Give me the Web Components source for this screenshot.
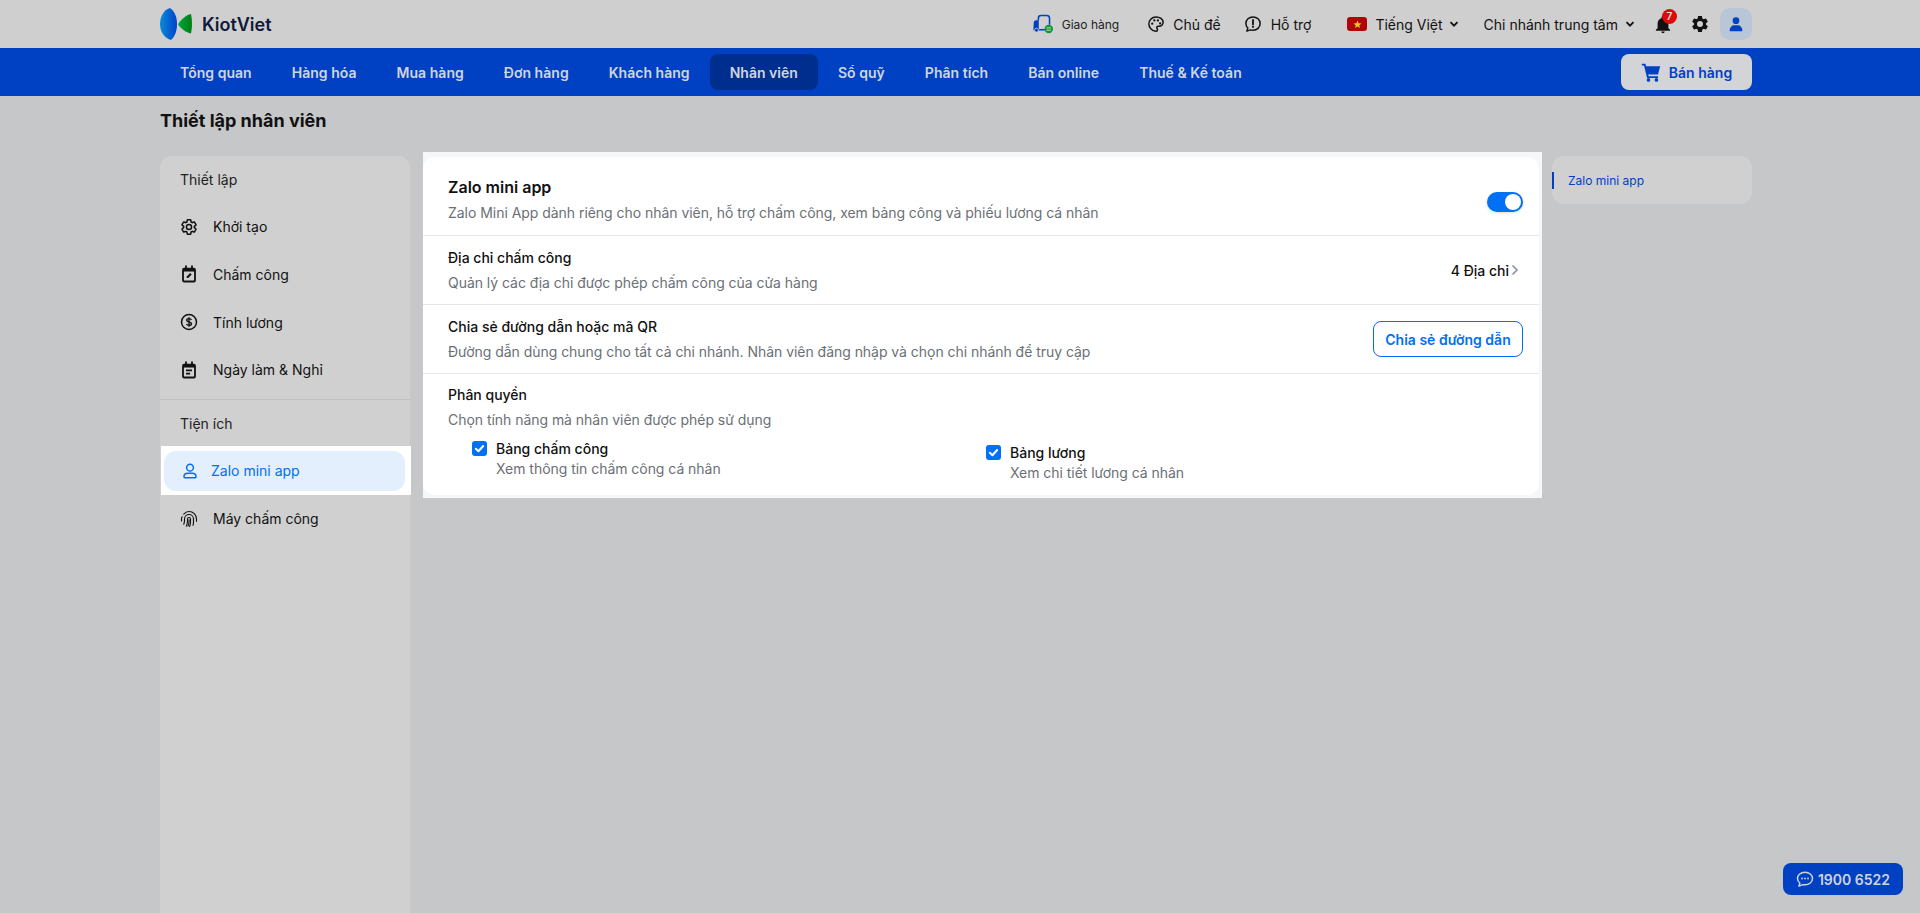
<!DOCTYPE html>
<html lang="vi">
<head>
<meta charset="utf-8">
<title>Thiết lập nhân viên</title>
<style>
html,body{margin:0;height:100%;overflow:hidden;background:#c6c7c9;font-family:Inter,"Noto Sans",sans-serif;}
</style>
</head>
<body>
<kv-app></kv-app>
<script>
const ICONS={
 gearOutline:'<svg viewBox="0 0 24 24" fill="none" stroke="currentColor" stroke-width="2"><path d="M19.14 12.94c.04-.3.06-.61.06-.94 0-.32-.02-.64-.07-.94l2.03-1.58a.49.49 0 0 0 .12-.61l-1.92-3.32a.488.488 0 0 0-.59-.22l-2.39.96c-.5-.38-1.03-.7-1.62-.94l-.36-2.54a.484.484 0 0 0-.48-.41h-3.84c-.24 0-.43.17-.47.41l-.36 2.54c-.59.24-1.13.57-1.62.94l-2.39-.96c-.22-.08-.47 0-.59.22L2.74 8.87c-.12.21-.08.47.12.61l2.03 1.58c-.05.3-.09.63-.09.94s.02.64.07.94l-2.03 1.58a.49.49 0 0 0-.12.61l1.92 3.32c.12.22.37.29.59.22l2.39-.96c.5.38 1.03.7 1.62.94l.36 2.54c.05.24.24.41.48.41h3.84c.24 0 .44-.17.47-.41l.36-2.54c.59-.24 1.13-.56 1.62-.94l2.39.96c.22.08.47 0 .59-.22l1.92-3.32c.12-.22.07-.47-.12-.61l-2.01-1.58z"/><circle cx="12" cy="12" r="3.4"/></svg>',
 calEdit:'<svg viewBox="0 0 24 24" fill="none" stroke="currentColor" stroke-width="2.4"><rect x="4" y="5" width="16" height="17" rx="1.5"/><path d="M4 7h16" stroke-width="3.4"/><path d="M8 1.5v4M16 1.5v4" stroke-linecap="round"/><path d="M9 17.2v-2l4.6-4.4 2 2-4.6 4.4z" fill="currentColor" stroke="none"/></svg>',
 dollar:'<svg viewBox="0 0 24 24" fill="none" stroke="currentColor" stroke-width="2"><circle cx="12" cy="12" r="10"/><path d="M15.2 9.2c-.4-1-1.6-1.7-3.2-1.7-1.800 0-3.100.9-3.100 2.200 0 3 6.400 1.600 6.400 4.600 0 1.300-1.400 2.200-3.300 2.200-1.600 0-2.900-.7-3.300-1.800M12 5.800v12.400" stroke-width="1.800"/></svg>',
 calNote:'<svg viewBox="0 0 24 24" fill="none" stroke="currentColor" stroke-width="2.4"><rect x="4" y="5" width="16" height="17" rx="1.5"/><path d="M4 7h16" stroke-width="3.4"/><path d="M8 1.5v4M16 1.500v4" stroke-linecap="round"/><path d="M8 12.500h8M8 16.800h5.500" stroke-width="2.200"/></svg>',
 person:'<svg viewBox="0 0 24 24" fill="none" stroke="currentColor" stroke-width="2"><circle cx="12" cy="7.500" r="4.500"/><path d="M4 19.500c0-3 2.500-4.500 5-4.500h6c2.500 0 5 1.500 5 4.500 0 1-.8 1.500-1.500 1.500h-13c-.7 0-1.500-.5-1.500-1.500z"/></svg>',
 finger:'<svg viewBox="0 0 24 24" fill="none" stroke="currentColor" stroke-width="1.500" stroke-linecap="round"><path d="M5 5.500C6.800 3.400 9.300 2 12 2c5.500 0 10 4.500 10 10v3"/><path d="M2.800 9C2.300 10 2 11 2 12v2.500"/><path d="M5 19c.6-1.500 1-3.300 1-5v-2c0-3.300 2.700-6 6-6s6 2.700 6 6v4c0 1.500-.2 3-.6 4.500"/><path d="M8.400 21.500C9.400 19.400 10 17 10 14.500V12c0-1.100.9-2 2-2s2 .9 2 2v3.500c0 2.300-.4 4.500-1.200 6.500"/><path d="M12 13v2.500c0 2-.5 4-1.300 5.800" /></svg>',
 truck:'<svg viewBox="0 0 28 26" fill="none"><path d="M8 8V5.500C8 3.500 9.500 2 11.500 2h7C21 2 22.500 3.500 22.500 5.500V14" stroke="#0041c4" stroke-width="2"/><path d="M9 20.500h8" stroke="#0041c4" stroke-width="2"/><path d="M2 11c0-1.500 1-3 3-3h3.500v13.500H3c-1 0-1.500-.6-1.500-1.500z" fill="#0041c4"/><circle cx="5.500" cy="21" r="2.500" fill="#0041c4" stroke="#cfcfcf" stroke-width="1"/><circle cx="21.500" cy="19.500" r="5.500" fill="#0a9a2e"/><path d="M18.500 18h6M18.500 21h6" stroke="#cfcfcf" stroke-width="1.300"/></svg>',
 palette:'<svg viewBox="0 0 24 24" fill="none"><path d="M12 2.500C6.700 2.500 2.500 6.700 2.500 12s4.200 9.500 9.500 9.500c1.200 0 2-.9 2-1.900 0-.6-.2-1-.5-1.400-.3-.4-.5-.8-.5-1.300 0-1 .8-1.900 1.900-1.900H16c3 0 5.500-2.300 5.500-5.200 0-4.300-4.300-7.300-9.500-7.300z" stroke="currentColor" stroke-width="2"/><circle cx="7" cy="11.500" r="1.500" fill="currentColor"/><circle cx="9.800" cy="7.200" r="1.500" fill="currentColor"/><circle cx="14.500" cy="7.200" r="1.500" fill="currentColor"/><circle cx="17.500" cy="11.300" r="1.500" fill="currentColor"/></svg>',
 help:'<svg viewBox="0 0 24 24" fill="none"><path d="M12 2.500c-5.300 0-9.500 3.900-9.500 8.900 0 2.400 1 4.500 2.600 6.100l-1.300 4 4.800-1.700c1.100.4 2.200.6 3.400.6 5.300 0 9.500-3.900 9.500-9s-4.200-8.900-9.500-8.900z" stroke="currentColor" stroke-width="2" stroke-linejoin="round"/><path d="M12 6.500v6" stroke="currentColor" stroke-width="2.400" stroke-linecap="round"/><circle cx="12" cy="15.800" r="1.400" fill="currentColor"/></svg>',
 chev:'<svg viewBox="0 0 10 10" fill="none" stroke="currentColor" stroke-width="1.800"><path d="M1.500 3.200 5 6.700l3.500-3.500"/></svg>',
 bell:'<svg viewBox="0 0 24 24" fill="currentColor"><path d="M12 23c1.100 0 2-.9 2-2h-4c0 1.100.9 2 2 2zm6.500-6v-5.500c0-3.100-1.700-5.700-4.700-6.400V4.300c0-1-.8-1.800-1.800-1.800s-1.800.8-1.800 1.800v.8c-3 .7-4.700 3.300-4.700 6.400V17L3.500 19v1h17v-1z"/></svg>',
 gear:'<svg viewBox="0 0 24 24" fill="currentColor"><path fill-rule="evenodd" d="M19.140 12.940c.04-.3.06-.61.06-.94 0-.32-.02-.64-.07-.94l2.030-1.580a.49.49 0 0 0 .12-.61l-1.920-3.320a.488.488 0 0 0-.59-.22l-2.390.96c-.5-.38-1.030-.7-1.620-.94l-.36-2.540a.484.484 0 0 0-.48-.41h-3.840c-.24 0-.43.17-.47.41l-.36 2.540c-.59.24-1.130.57-1.620.94l-2.390-.96c-.22-.08-.47 0-.59.22L2.740 8.870c-.12.21-.08.47.12.61l2.030 1.580c-.05.3-.09.63-.09.94s.02.64.07.94l-2.030 1.580a.49.49 0 0 0-.12.61l1.920 3.320c.12.22.37.29.59.22l2.390-.96c.5.38 1.030.7 1.620.94l.36 2.540c.05.24.24.41.48.41h3.840c.24 0 .44-.17.47-.41l.36-2.540c.59-.24 1.130-.56 1.620-.94l2.390.96c.22.08.47 0 .59-.22l1.920-3.320c.12-.22.07-.47-.12-.61l-2.010-1.580zM12 15.600a3.600 3.600 0 1 1 0-7.200 3.600 3.600 0 0 1 0 7.200z"/></svg>',
 avatar:'<svg viewBox="0 0 24 24" fill="currentColor"><circle cx="12" cy="7" r="5"/><path d="M2.500 22c0-5 3.500-8 7-8h5c3.500 0 7 3 7 8 0 .6-.4 1-1 1h-17c-.6 0-1-.4-1-1z"/></svg>',
 cart:'<svg viewBox="0 0 24 24" fill="currentColor"><path d="M1 2h4.300l.8 3H23l-2.600 10H8.600l.5 2h11.400v2.300H7.300L3.600 4.300H1z"/><circle cx="9" cy="21.500" r="2.200"/><circle cx="18.500" cy="21.500" r="2.200"/></svg>',
 chat:'<svg viewBox="0 0 24 24" fill="none"><path d="M12 3c-5.500 0-10 3.600-10 8.300 0 2.400 1.200 4.500 3.100 6L4 21.500l5.200-2c.9.200 1.800.3 2.800.3 5.500 0 10-3.800 10-8.500S17.500 3 12 3z" stroke="currentColor" stroke-width="2" stroke-linejoin="round"/><circle cx="8" cy="11.300" r="1.200" fill="currentColor"/><circle cx="12" cy="11.300" r="1.200" fill="currentColor"/><circle cx="16" cy="11.300" r="1.200" fill="currentColor"/></svg>'
};
function def(name,css,html){
  customElements.define(name,class extends HTMLElement{
    connectedCallback(){
      if(this.shadowRoot)return;
      const r=this.attachShadow({mode:'open'});
      r.innerHTML='<style>'+css+'</style>'+(typeof html==='function'?html(this):html);
    }
  });
}
const a=(el,k,d='')=>el.getAttribute(k)??d;

def('kv-icon',':host{display:inline-flex;flex:none;line-height:0}svg{width:100%;height:100%;display:block}',
  el=>ICONS[a(el,'name')]||'');

def('kv-logo',`:host{display:flex;align-items:center}
  svg{width:32px;height:32px;display:block;margin-right:10px}
  span{font:600 18px Inter,sans-serif;color:#0f1a3a}`,
  `<svg viewBox="0 0 32 32"><defs><linearGradient id="b" x1="0" x2="1"><stop offset="0" stop-color="#0b8ad8"/><stop offset="1" stop-color="#0043cc"/></linearGradient><linearGradient id="g" x1="0" x2="1"><stop offset="0" stop-color="#00a53d"/><stop offset="1" stop-color="#007f10"/></linearGradient></defs>
  <path d="M10 0C3.500 2 0 9 0 16c0 7 3.500 13.500 11 16 4-3.500 6-9.500 6-16C17 9.500 15 3.500 10 0z" fill="url(#b)"/>
  <path d="M31 6c-5 1-10 5.500-13 10.200C21 21 26 24.500 31 25.500c1.300-6 1.300-13.500 0-19.500z" fill="url(#g)"/></svg><span>KiotViet</span>`);

def('kv-top-link',`:host{display:flex;align-items:center;color:#111;font:400 14px Inter,sans-serif;white-space:nowrap}
  ::slotted(kv-icon){margin-right:var(--g,8px)}`,'<slot></slot>');

def('kv-topbar',`:host{display:flex;align-items:center;height:48px;background:#cfcfcf;padding:0 168px 0 160px;box-sizing:border-box}
  .r{margin-left:auto;display:flex;align-items:center}
  .flag{width:20px;height:14px;background:#b00606;border-radius:3px;display:flex;align-items:center;justify-content:center;margin-right:8px}
  .flag svg{width:9px;height:9px}
  .bell{position:relative;width:20px;height:22px;color:#111;margin-left:18px}
  .badge{position:absolute;top:-4px;left:9px;width:15px;height:15px;border-radius:50%;background:#d90b0b;color:#e8e0e0;font:600 10px/15px Inter,sans-serif;text-align:center}
  .avatar{width:32px;height:32px;border-radius:10px;background:#b9c6d8;display:flex;align-items:center;justify-content:center;color:#0041c4;margin-left:10px}
  `,`<kv-logo></kv-logo><div class="r">
   <kv-top-link style="--g:8px;font-size:12px;color:#222"><kv-icon name="truck" style="width:22px;height:20px"></kv-icon>Giao hàng</kv-top-link>
   <kv-top-link style="margin-left:28px;--g:8px"><kv-icon name="palette" style="width:18px;height:18px"></kv-icon>Chủ đề</kv-top-link>
   <kv-top-link style="margin-left:23px;--g:9px"><kv-icon name="help" style="width:18px;height:18px"></kv-icon>Hỗ trợ</kv-top-link>
   <kv-top-link style="margin-left:36px"><span class="flag"><svg viewBox="0 0 20 20"><polygon fill="#f4c430" points="10,1 12.400,7.400 19,7.500 13.800,11.600 15.700,18 10,14.200 4.300,18 6.200,11.600 1,7.500 7.600,7.400"/></svg></span>Tiếng Việt<kv-icon name="chev" style="width:10px;height:10px;margin:0 0 0 6px"></kv-icon></kv-top-link>
   <kv-top-link style="margin-left:25px">Chi nhánh trung tâm<kv-icon name="chev" style="width:10px;height:10px;margin:0 0 0 7px"></kv-icon></kv-top-link>
   <div class="bell"><kv-icon name="bell" style="width:20px;height:22px"></kv-icon><span class="badge">7</span></div>
   <kv-icon name="gear" style="width:20px;height:20px;margin-left:17px;color:#111"></kv-icon>
   <div class="avatar"><kv-icon name="avatar" style="width:16px;height:16px"></kv-icon></div>
  </div>`);

def('kv-nav-item',`:host{display:flex;align-items:center;height:36px;padding:0 20px;border-radius:8px;color:#d0d5dd;font:600 14px Inter,sans-serif;white-space:nowrap;letter-spacing:.03px}
  :host([active]){background:#002e8f}`,'<slot></slot>');

def('kv-navbar',`:host{display:flex;align-items:center;height:48px;background:#0041c4;padding:0 168px 0 160px;box-sizing:border-box}
  button{margin-left:auto;display:flex;align-items:center;height:36px;width:131px;justify-content:center;gap:8px;border:0;border-radius:8px;background:#d2d4d8;color:#0041c4;font:600 14px Inter,sans-serif;padding:0}`,
  `<kv-nav-item>Tổng quan</kv-nav-item><kv-nav-item>Hàng hóa</kv-nav-item><kv-nav-item>Mua hàng</kv-nav-item><kv-nav-item>Đơn hàng</kv-nav-item><kv-nav-item>Khách hàng</kv-nav-item><kv-nav-item active>Nhân viên</kv-nav-item><kv-nav-item>Sổ quỹ</kv-nav-item><kv-nav-item>Phân tích</kv-nav-item><kv-nav-item>Bán online</kv-nav-item><kv-nav-item>Thuế &amp; Kế toán</kv-nav-item>
  <button><kv-icon name="cart" style="width:20px;height:20px"></kv-icon>Bán hàng</button>`);

def('kv-side-item',`:host{display:flex;align-items:center;height:47.67px;padding-left:20px;color:#111;font:400 14px Inter,sans-serif;box-sizing:border-box}
  kv-icon{width:18px;height:18px;margin-right:15px}
  .p{display:contents}
  :host([active]){background:#fff;height:49px;margin:-2px -1px 0 1px;padding:5px 6px 4px 3px}
  :host([active]) .p{display:flex;align-items:center;flex:1;height:100%;background:#e3effd;border-radius:12px;color:#0070f4;padding-left:17px}
  :host([active]) kv-icon{margin-right:12px}`,
  el=>`<div class="p"><kv-icon name="${a(el,'icon')}"></kv-icon><slot></slot></div>`);

def('kv-side-head',`:host{display:flex;align-items:center;height:48px;padding-left:20px;color:#222;font:400 14px Inter,sans-serif}`,'<slot></slot>');

def('kv-sidebar',`:host{display:block;width:250px;flex:none;background:#d0d0d0;border-radius:12px 12px 0 0;margin-top:4px}
  .h1{height:47px}
  hr{border:0;border-top:1px solid #bfc0c2;margin:5.3px 0 0}`,
  `<kv-side-head class="h1">Thiết lập</kv-side-head>
   <kv-side-item icon="gearOutline">Khởi tạo</kv-side-item>
   <kv-side-item icon="calEdit">Chấm công</kv-side-item>
   <kv-side-item icon="dollar">Tính lương</kv-side-item>
   <kv-side-item icon="calNote">Ngày làm &amp; Nghỉ</kv-side-item>
   <hr>
   <kv-side-head>Tiện ích</kv-side-head>
   <kv-side-item active icon="person">Zalo mini app</kv-side-item>
   <kv-side-item icon="finger">Máy chấm công</kv-side-item>`);

def('kv-row',`:host{display:flex;align-items:center;justify-content:space-between;box-sizing:border-box;padding:0 16px 0 25px;border-bottom:1px solid #e5e7eb}
  :host([big]){padding-top:12px}
  .w{padding-bottom:1px}
  :host([big]) .w{padding-bottom:6px}
  .t{font:500 14px/17px Inter,sans-serif;color:#111}
  :host([big]) .t{font:600 16px/20px Inter,sans-serif}
  .s{font:400 14px/17px Inter,sans-serif;color:#6b7076;margin-top:8px;letter-spacing:-.04px}
  :host([big]) .s{margin-top:7px}`,
  el=>`<div class="w"><div class="t">${a(el,'title')}</div><div class="s">${a(el,'sub')}</div></div><slot></slot>`);

def('kv-toggle',`:host{display:block;width:36px;height:20px;border-radius:10px;background:#0070f4;position:relative;box-shadow:0 1px 3px rgba(0,0,0,.15)}
  i{position:absolute;right:2px;top:2px;width:16px;height:16px;border-radius:50%;background:#fff}`,'<i></i>');

def('kv-check',`:host{display:flex;align-items:flex-start}
  .b{width:15px;height:15px;border-radius:3px;background:#0070f4;margin:1px 9px 0 0;flex:none;display:flex;align-items:center;justify-content:center}
  svg{width:11px;height:11px}
  .t{font:500 14px/17px Inter,sans-serif;color:#111}
  .s{font:400 14px/17px Inter,sans-serif;color:#6b7076;margin-top:2.5px;letter-spacing:-.04px}`,
  el=>`<div class="b"><svg viewBox="0 0 12 12" fill="none" stroke="#fff" stroke-width="2.200" stroke-linecap="round" stroke-linejoin="round"><path d="M2 6.300 4.800 9 10 3.300"/></svg></div><div><div class="t">${a(el,'title')}</div><div class="s">${a(el,'sub')}</div></div>`);

def('kv-card',`:host{display:block;background:#fff;border-radius:12px;width:1116px;height:338px;margin-top:5px;overflow:hidden}
  .addr{display:flex;align-items:center;font:500 14px Inter,sans-serif;color:#111;margin-right:3px}
  .addr svg{width:10px;height:14px;margin-left:1px;color:#8a8f98}
  button{width:150px;height:36px;border:1px solid #0070f4;border-radius:8px;background:#fff;color:#0070f4;font:600 14px Inter,sans-serif;padding:0}
  .perm{display:block;padding:12px 16px 0 25px}
  .t{font:500 14px/17px Inter,sans-serif;color:#111}
  .s{font:400 14px/17px Inter,sans-serif;color:#6b7076;margin-top:8px;letter-spacing:-.04px}
  .g{display:grid;grid-template-columns:514px 1fr;margin:12px 0 0 24px}
  `,`<kv-row big title="Zalo mini app" sub="Zalo Mini App dành riêng cho nhân viên, hỗ trợ chấm công, xem bảng công và phiếu lương cá nhân" style="height:79px"><kv-toggle></kv-toggle></kv-row>
  <kv-row title="Địa chỉ chấm công" sub="Quản lý các địa chỉ được phép chấm công của cửa hàng" style="height:69px"><div class="addr">4 Địa chỉ<svg viewBox="0 0 10 14" fill="none" stroke="currentColor" stroke-width="1.600"><path d="M2.500 2.500 7 7l-4.500 4.500"/></svg></div></kv-row>
  <kv-row title="Chia sẻ đường dẫn hoặc mã QR" sub="Đường dẫn dùng chung cho tất cả chi nhánh. Nhân viên đăng nhập và chọn chi nhánh để truy cập" style="height:69px"><button>Chia sẻ đường dẫn</button></kv-row>
  <div class="perm"><div class="t">Phân quyền</div><div class="s">Chọn tính năng mà nhân viên được phép sử dụng</div>
   <div class="g"><kv-check title="Bảng chấm công" sub="Xem thông tin chấm công cá nhân"></kv-check><kv-check style="margin-top:4px" title="Bảng lương" sub="Xem chi tiết lương cá nhân"></kv-check></div></div>`);

def('kv-spot',`:host{display:block;background:#f6f7f9;width:1119px;height:346px;flex:none;margin:0 10px 0 13px;}`,'<kv-card></kv-card>');

def('kv-toc',`:host{display:flex;align-items:center;width:200px;height:48px;flex:none;background:#d0d0d0;border-radius:12px;margin-top:4px;color:#0041c4;font:400 12px Inter,sans-serif}
  i{width:2px;height:17px;background:#0041c4;margin-right:14px}`,'<i></i><slot></slot>');

def('kv-float',`:host{position:fixed;right:17px;bottom:18px;width:120px;height:32px;border-radius:8px;background:#0041c4;color:#d0d5dd;display:flex;align-items:center;justify-content:center;gap:4px;font:600 14px Inter,sans-serif}`,
  `<kv-icon name="chat" style="width:18px;height:18px"></kv-icon>1900 6522`);

def('kv-app',`:host{display:flex;flex-direction:column;height:913px;overflow:hidden;font-family:Inter,sans-serif}
  h1{margin:0;padding:0 0 6px 160px;font:700 18px/22px Inter,sans-serif;color:#111;display:flex;align-items:center;box-sizing:border-box;height:56px;flex:none}
  .m{display:flex;flex:1;padding-left:160px;min-height:0;align-items:flex-start}
  .m>kv-sidebar{height:100%}`,
  `<kv-topbar></kv-topbar><kv-navbar></kv-navbar><h1>Thiết lập nhân viên</h1>
   <div class="m"><kv-sidebar></kv-sidebar><kv-spot></kv-spot><kv-toc>Zalo mini app</kv-toc></div><kv-float></kv-float>`);
</script>
</body>
</html>
